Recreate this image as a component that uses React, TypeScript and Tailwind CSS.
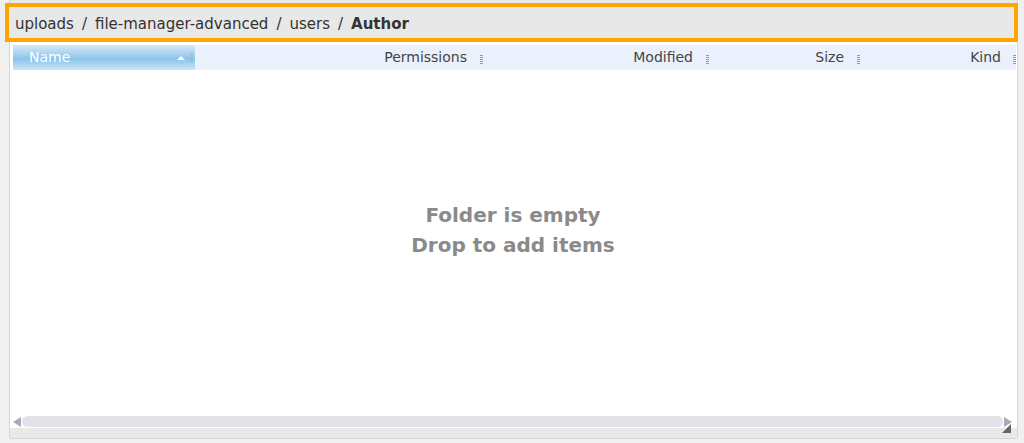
import React from 'react'

const font = { fontFamily: '"DejaVu Sans", Verdana, sans-serif' }

// little dotted resize grip at the right edge of a column header
function Grip({ light }: { light?: boolean }) {
  return (
    <span
      className={`block h-[10px] w-[3px] shrink-0 bg-[repeating-linear-gradient(to_bottom,#9a9a9a_0px,#9a9a9a_1px,transparent_1px,transparent_2px)] ${
        light ? 'opacity-40' : ''
      }`}
    />
  )
}

type Col = { label: string; width: string }

const columns: Col[] = [
  { label: 'Permissions', width: 'w-[292px] shrink-0 pr-[4px]' },
  { label: 'Modified', width: 'w-[226px] shrink-0 pr-[4px]' },
  { label: 'Size', width: 'w-[151px] shrink-0 pr-[4px]' },
  { label: 'Kind', width: 'flex-1 pr-0' },
]

export default function App() {
  return (
    <div className="h-[443px] w-[1024px] overflow-hidden bg-[#f0f0f0] text-[#333]" style={font}>
      <div className="ml-[9px] flex h-[439px] w-[1009px] flex-col rounded-b-[3px] border-x border-b border-[#d6d6d6] bg-[#e9e9e9]">
        {/* Breadcrumb toolbar */}
        <div className="h-[42px] shrink-0 pt-[7px]">
          <div className="-ml-px flex h-[31px] w-[1005px] items-center bg-[#e8e8e8] px-[6px] pt-[3px] text-[15px] text-[#333] outline-4 outline-[#ffa500]">
            <span>uploads</span>
            <span className="px-[8px]">/</span>
            <span>file-manager-advanced</span>
            <span className="px-[8px]">/</span>
            <span>users</span>
            <span className="px-[8px]">/</span>
            <span className="font-bold">Author</span>
          </div>
        </div>

        {/* File list area */}
        <div className="flex flex-1 flex-col bg-white pt-[3px] pl-[3px]">
          {/* Column header */}
          <div className="mr-px flex h-[25px] shrink-0 items-center bg-[#eaf1fc] text-[14px] text-[#444]">
            <div className="flex h-full w-[182px] shrink-0 items-center bg-[linear-gradient(to_bottom,#d4e8f8_0%,#a9d2f0_35%,#8cc4ec_55%,#b4d8f2_85%,#d0e6f7_100%)] pl-[16px] pr-[2px] text-white">
              <span className="flex-1">Name</span>
              <span className="mr-[5px] h-0 w-0 border-x-[4px] border-b-[4px] border-x-transparent border-b-white" />
              <Grip light />
            </div>
            {columns.map((c) => (
              <div key={c.label} className={`flex h-full ${c.width} items-center justify-end`}>
                <span>{c.label}</span>
                <span className={`${c.label === 'Kind' ? 'ml-[12px]' : 'ml-[13px]'} mt-[5px]`}>
                  <Grip />
                </span>
              </div>
            ))}
          </div>

          {/* Empty message */}
          <div className="flex flex-1 flex-col items-center justify-center pb-[27px] pr-[4px] text-[20px] font-bold leading-[30px] text-[#8a8a8a]">
            <div>Folder is empty</div>
            <div>Drop to add items</div>
          </div>

          {/* Horizontal scrollbar */}
          <div className="flex h-[11px] shrink-0 items-center pr-[5px]">
            <span className="h-0 w-0 border-y-[5px] border-r-[8px] border-y-transparent border-r-[#a9a9bd]" />
            <div className="mx-px h-[11px] flex-1 rounded-[6px] bg-[#e2e2e8]" />
            <span className="h-0 w-0 border-y-[5px] border-l-[8px] border-y-transparent border-l-[#a9a9bd]" />
          </div>
          <div className="h-px shrink-0" />
        </div>

        {/* Status bar */}
        <div className="relative h-[10px] shrink-0 bg-[#e9e9e9]">
          <span className="absolute -top-[4px] right-[6px] h-0 w-0 border-b-[9px] border-l-[9px] border-b-[#666] border-l-transparent" />
        </div>
      </div>
    </div>
  )
}
